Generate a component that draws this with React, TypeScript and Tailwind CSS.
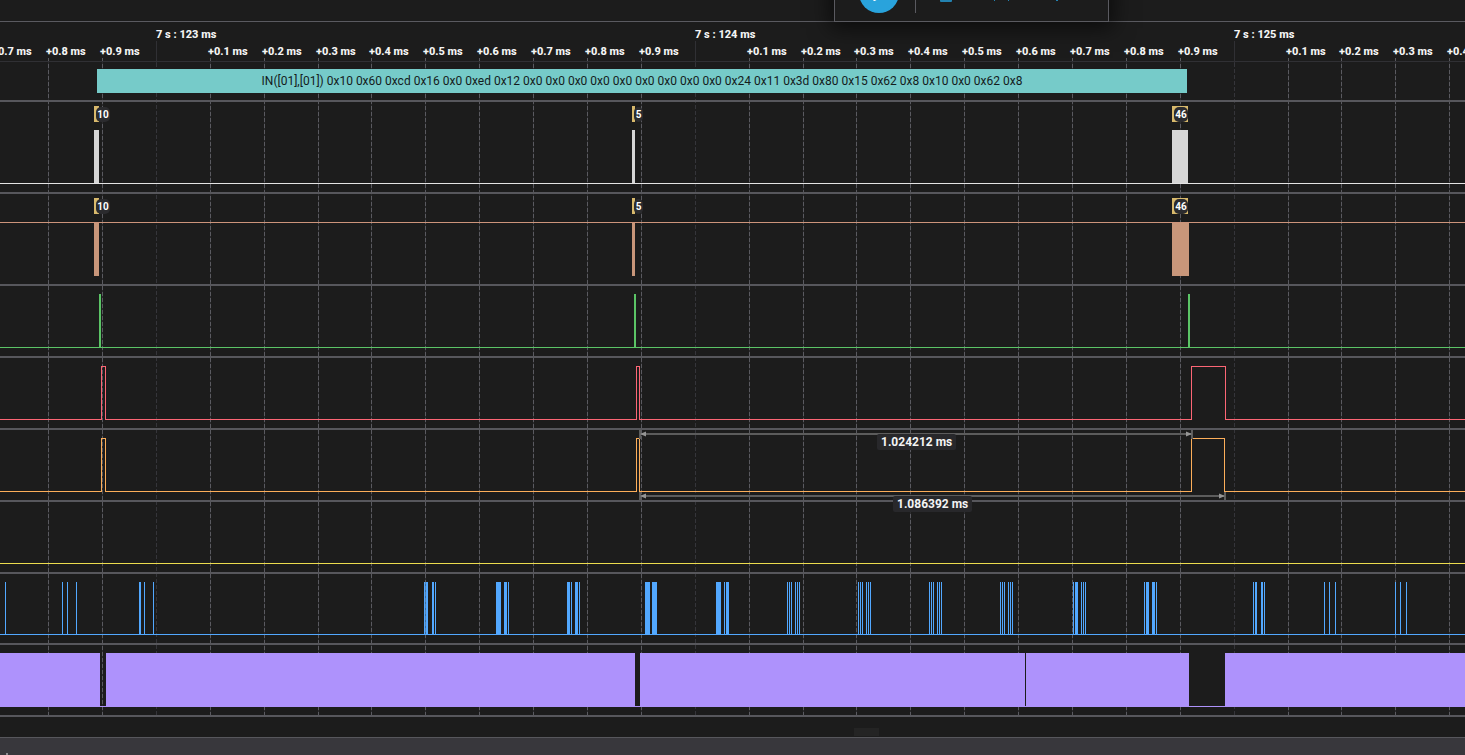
import type { ReactNode } from "react";

type Pulse = [x: number, width: number];

const MAJOR = [
    { x: 156, label: "7 s : 123 ms" },
    { x: 695, label: "7 s : 124 ms" },
    { x: 1234, label: "7 s : 125 ms" },
];

const MINOR = [
    { x: -6, label: "+0.7 ms" },
    { x: 48, label: "+0.8 ms" },
    { x: 102, label: "+0.9 ms" },
    { x: 210, label: "+0.1 ms" },
    { x: 264, label: "+0.2 ms" },
    { x: 318, label: "+0.3 ms" },
    { x: 371, label: "+0.4 ms" },
    { x: 425, label: "+0.5 ms" },
    { x: 479, label: "+0.6 ms" },
    { x: 533, label: "+0.7 ms" },
    { x: 587, label: "+0.8 ms" },
    { x: 641, label: "+0.9 ms" },
    { x: 749, label: "+0.1 ms" },
    { x: 803, label: "+0.2 ms" },
    { x: 856, label: "+0.3 ms" },
    { x: 910, label: "+0.4 ms" },
    { x: 964, label: "+0.5 ms" },
    { x: 1018, label: "+0.6 ms" },
    { x: 1072, label: "+0.7 ms" },
    { x: 1126, label: "+0.8 ms" },
    { x: 1180, label: "+0.9 ms" },
    { x: 1288, label: "+0.1 ms" },
    { x: 1341, label: "+0.2 ms" },
    { x: 1395, label: "+0.3 ms" },
    { x: 1449, label: "+0.4 ms" },
];

const BRACKETS = [
    { x: 94, width: 5, badgeX: 96, badgeWidth: 14, count: "10" },
    { x: 632, width: 3, badgeX: 634, badgeWidth: 9, count: "5" },
    { x: 1172, width: 16, badgeX: 1174, badgeWidth: 14, count: "46" },
];

const CLOCK: Pulse[] = [[94, 5], [632, 3], [1172, 16]];
const DATA: Pulse[] = [[94, 5], [632, 3], [1172, 17]];
const SELECT: Pulse[] = [[99, 2], [634, 2], [1188, 2]];
const SERIAL: Pulse[] = [
    [5, 1], [62, 1], [67, 1], [76, 1], [139, 2], [144, 1], [153, 1],
    [424, 1], [426, 2], [432, 2], [435, 1],
    [496, 5], [504, 3], [508, 1],
    [567, 3], [571, 1], [575, 3], [579, 1],
    [645, 5], [652, 5],
    [716, 5], [724, 1], [726, 3],
    [787, 1], [789, 1], [791, 1], [795, 1], [797, 1], [799, 1],
    [858, 1], [860, 1], [862, 1], [866, 1], [868, 1], [870, 1],
    [929, 1], [931, 1], [933, 1], [937, 1], [939, 1], [941, 1],
    [1000, 1], [1002, 1], [1004, 1], [1008, 1], [1010, 1], [1012, 1],
    [1073, 1], [1075, 3], [1081, 1], [1083, 1], [1085, 1],
    [1144, 1], [1146, 3], [1152, 3], [1156, 1],
    [1253, 1], [1255, 2], [1261, 2], [1264, 1],
    [1324, 1], [1329, 1], [1335, 1],
    [1395, 1], [1400, 1], [1406, 1],
];

function Toolbar() {
    return (
        <div className="absolute -top-9 left-[834px] z-10 flex h-[58px] w-[275px] items-center border border-[#5a5a60] bg-[#1c1c1c] pl-6 shadow-[0_2px_20px_4px_rgba(0,0,0,0.6)]">
            <button type="button" aria-label="Start" className="flex size-10 items-center justify-center rounded-full bg-[#29a3dc]">
                <svg width="20" height="20" viewBox="0 0 20 20" fill="#fff">
                    <path d="M4 3.5v13c0 1.2 1.2 1.9 2.2 1.3l10.4-6.5c.9-.6.9-2 0-2.6L6.2 2.2C5.2 1.600 4 2.300 4 3.500z" />
                </svg>
            </button>
            <div className="ml-4 h-10 w-px bg-[#5a5a60]" />
            <svg className="ml-6" width="130" height="18" viewBox="0 0 130 18" fill="#2382b0">
                <rect x="0" y="3" width="12" height="15" rx="1" />
                <path d="M54 13h1v4h-1zM68 13h1v4h-1zM116 13h2v4h-2z" />
            </svg>
        </div>
    );
}

function Grid() {
    return (
        <svg className="absolute inset-0 h-full w-full" shapeRendering="crispEdges">
            {MINOR.map(({ x }) => (
                <g key={x}>
                    <rect x={x} y="36" width="1" height="657" fill="#2c2c2e" />
                    <line x1={x + 0.5} x2={x + 0.5} y1="36" y2="693" stroke="#5a5a60" strokeDasharray="4 2" />
                </g>
            ))}
            {MAJOR.map(({ x }) => (
                <g key={x}>
                    <rect x={x} y="19" width="1" height="22" fill="#303034" />
                    <line x1={x + 0.5} x2={x + 0.5} y1="41" y2="693" stroke="#35353a" strokeDasharray="4 2" />
                </g>
            ))}
        </svg>
    );
}

function Ruler() {
    return (
        <div className="relative h-10 border-b border-[#303034]">
            <svg className="block h-full w-full fill-[#f4f4f4] text-[11px] font-extrabold">
                {MAJOR.map(({ x, label }) => (
                    <text key={x} x={x} y="16">{label}</text>
                ))}
                {MINOR.map(({ x, label }) => (
                    <text key={x} x={x - 2} y="33">{label}</text>
                ))}
            </svg>
        </div>
    );
}

function Channel({ height, children }: { height: string; children?: ReactNode }) {
    return (
        <div className={`relative border-b-2 border-[#57575c] ${height}`}>
            <svg className="block h-full w-full overflow-visible" shapeRendering="crispEdges">
                {children}
            </svg>
        </div>
    );
}

function Bars({ pulses, top, height, color }: { pulses: Pulse[]; top: number; height: number; color: string }) {
    return (
        <g fill={color}>
            {pulses.map(([x, width]) => (
                <rect key={x} x={x} y={top} width={width} height={height} />
            ))}
        </g>
    );
}

function Brackets() {
    return (
        <>
            {BRACKETS.map(({ x, width, badgeX, badgeWidth, count }) => (
                <g key={x}>
                    <rect x={x} y="4" width={width} height="16" fill="#d8b96c" />
                    <rect x={badgeX} y="5" width={badgeWidth} height="15" rx="5" fill="#2b2b2e" shapeRendering="auto" />
                    <text x={badgeX + badgeWidth / 2} y="16" textAnchor="middle" className="fill-white text-[10px] font-bold">
                        {count}
                    </text>
                </g>
            ))}
        </>
    );
}

// Low line with narrow outlined pulses, `last` is the right edge of the wide one
function Outline({ color, last }: { color: string; last: number }) {
    return (
        <path
            d={`M0 61.500H101.500V8.500H105.500V61.500H636.500V8.500H639.500V61.500H1191.500V8.500H${last}.500V61.500H4000`}
            fill="none"
            stroke={color}
        />
    );
}

function Measurement({ y, end, tickTop, tickBottom }: { y: number; end: number; tickTop: number; tickBottom: number }) {
    return (
        <g fill="#5c5c5c">
            <rect x="640" y={y} width={end - 640} height="2" />
            <rect x="639" y={tickTop} width="2" height={tickBottom - tickTop} />
            <rect x={end - 1} y={tickTop} width="2" height={tickBottom - tickTop} />
            <path d={`M640 ${y + 1}l6 -2.500v5zM${end} ${y + 1}l-6 -2.500v5z`} fill="#959595" shapeRendering="auto" />
        </g>
    );
}

export default function App() {
    return (
        <div className="relative flex min-h-screen flex-col overflow-hidden bg-[#1c1c1c] font-['Roboto',sans-serif]">
            <header className="h-[22px] border-b border-[#5a5a60]">
                <Toolbar />
            </header>

            <main className="relative">
                <Grid />
                <Ruler />

                {/* analyzer */}
                <div className="relative h-10 border-b-2 border-[#57575c] pt-[7px]">
                    <div className="ml-[97px] flex h-6 w-[1090px] items-center justify-center bg-[#76cbc9] text-xs whitespace-nowrap text-[#141c1c]">
                        IN([01],[01]) 0x10 0x60 0xcd 0x16 0x0 0xed 0x12 0x0 0x0 0x0 0x0 0x0 0x0 0x0 0x0 0x0 0x24 0x11 0x3d 0x80 0x15 0x62 0x8 0x10 0x0 0x62 0x8
                    </div>
                </div>

                <Channel height="h-[92px]">
                    <rect y="81" width="100%" height="1" fill="#e4e4e4" />
                    <Bars pulses={CLOCK} top={28} height={53} color="#d6d6d6" />
                    <Brackets />
                </Channel>
                <Channel height="h-[92px]">
                    <rect y="28" width="100%" height="1" fill="#cd947b" />
                    <Bars pulses={DATA} top={29} height={53} color="#c8967a" />
                    <Brackets />
                </Channel>
                <Channel height="h-[72px]">
                    <rect y="61" width="100%" height="1" fill="#5bc466" />
                    <Bars pulses={SELECT} top={8} height={53} color="#5bc466" />
                </Channel>
                <Channel height="h-[72px]">
                    <Outline color="#fc6675" last={1225} />
                </Channel>

                <div className="relative z-[1]">
                    <Channel height="h-[72px]">
                        <Outline color="#fcae5a" last={1224} />
                        <Measurement y={3} end={1192} tickTop={0} tickBottom={9} />
                        <Measurement y={65} end={1225} tickTop={62} tickBottom={70} />
                    </Channel>
                    <span className="absolute top-1 left-[877px] rounded-xs bg-[#28282b] px-1 text-xs font-bold text-[#f4f4f4]">1.024212 ms</span>
                    <span className="absolute top-[66px] left-[893px] rounded-xs bg-[#28282b] px-1 text-xs font-bold text-[#f4f4f4]">1.086392 ms</span>
                </div>

                <Channel height="h-[72px]">
                    <rect y="61" width="100%" height="1" fill="#ecdc4e" />
                </Channel>
                <Channel height="h-[71px]">
                    <rect y="60" width="100%" height="1" fill="#52a8ff" />
                    <Bars pulses={SERIAL} top={8} height={52} color="#52a8ff" />
                    <rect x="425" y="8" width="1" height="52" fill="#52a8ff" opacity="0.5" />
                </Channel>
                <Channel height="h-[72px]">
                    <rect y="61" width="100%" height="1" fill="#ae92fc" />
                    <Bars pulses={[[0, 100], [106, 529], [640, 385], [1026, 163], [1225, 2775]]} top={8} height={53} color="#ae92fc" />
                </Channel>
            </main>

            <div className="flex h-5 items-end pb-px pl-[854px]">
                <div className="h-2 w-[25px] bg-[#242424]" />
            </div>
            <footer className="flex min-h-[18px] flex-1 items-end border-t border-[#57575c] bg-[#38373c] pl-1.5">
                <div className="h-0.5 w-0.5 bg-[#8c8c90]" />
            </footer>
        </div>
    );
}
